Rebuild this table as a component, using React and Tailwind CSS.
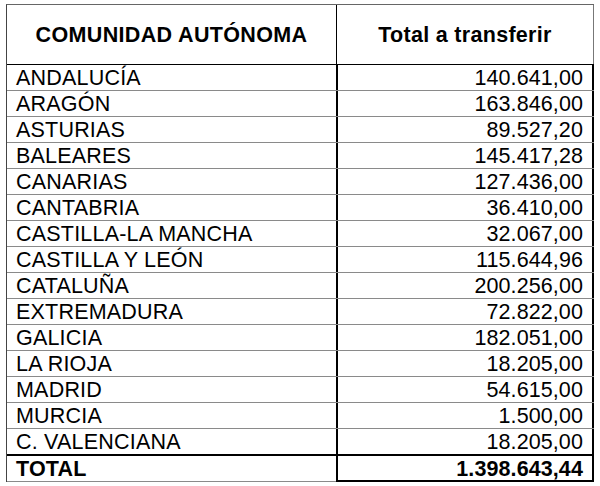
const rows = [
  ["ANDALUCÍA", "140.641,00"],
  ["ARAGÓN", "163.846,00"],
  ["ASTURIAS", "89.527,20"],
  ["BALEARES", "145.417,28"],
  ["CANARIAS", "127.436,00"],
  ["CANTABRIA", "36.410,00"],
  ["CASTILLA-LA MANCHA", "32.067,00"],
  ["CASTILLA Y LEÓN", "115.644,96"],
  ["CATALUÑA", "200.256,00"],
  ["EXTREMADURA", "72.822,00"],
  ["GALICIA", "182.051,00"],
  ["LA RIOJA", "18.205,00"],
  ["MADRID", "54.615,00"],
  ["MURCIA", "1.500,00"],
  ["C. VALENCIANA", "18.205,00"],
];

export default function App() {
  return (
    <div
      className="w-[600px] h-[486px] bg-white pt-[4px] pl-[6px] text-black"
      style={{ fontFamily: '"Liberation Sans", Arial, sans-serif' }}
    >
      <div className="w-[588px] border-l border-t border-l-[#444] border-t-[#666]">
        <div className="flex h-[60px] border-b border-black">
          <div className="w-[329px] flex items-center justify-center font-bold text-[21.5px] tracking-[0.35px] pt-[2px] whitespace-nowrap">
            COMUNIDAD AUTÓNOMA
          </div>
          <div className="flex-1 flex items-center justify-center font-bold text-[21.5px] tracking-[0.3px] pt-[2px] border-l border-black border-r border-r-[#777] whitespace-nowrap">
            Total a transferir
          </div>
        </div>
        {rows.map(([name, val], i) => (
          <div
            key={name}
            className={
              "flex h-[26px] border-b " +
              (i === rows.length - 1 ? "border-black" : "border-[#8a8a8a]")
            }
          >
            <div className="w-[329px] pl-[9px] text-[21.5px] tracking-[0.2px] leading-[27px] whitespace-nowrap">
              {name}
            </div>
            <div className="flex-1 border-l-2 border-r-2 border-black pr-[9px] text-right text-[21.5px] tracking-[0.1px] leading-[27px]">
              {val}
            </div>
          </div>
        ))}
        <div className="flex h-[27px] border-t border-black">
          <div className="w-[329px] pl-[9px] font-bold text-[21.5px] tracking-[0.2px] leading-[26px] border-b border-[#8a8a8a]">
            TOTAL
          </div>
          <div className="flex-1 border-l-2 border-r-2 border-b-2 border-black pr-[9px] text-right font-bold text-[21.5px] tracking-[0.1px] leading-[26px]">
            1.398.643,44
          </div>
        </div>
      </div>
    </div>
  );
}
